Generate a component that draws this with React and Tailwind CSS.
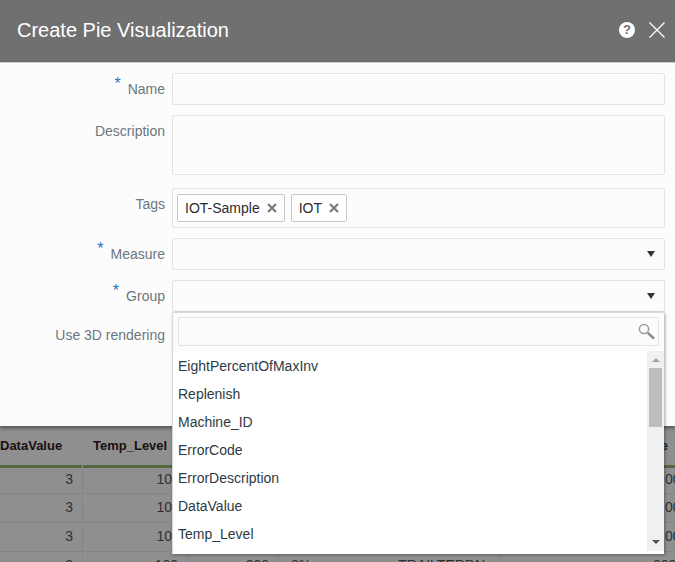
const FONT = "font-['Liberation_Sans',Arial,sans-serif]"

const FIELDS_OPTIONS = [
  'EightPercentOfMaxInv',
  'Replenish',
  'Machine_ID',
  'ErrorCode',
  'ErrorDescription',
  'DataValue',
  'Temp_Level',
]

function Label({ children, required, className = '' }) {
  return (
    <div className={`w-[165px] shrink-0 text-right text-sm text-[#6b7780] ${className}`}>
      {required && <span className="relative -top-[5px] mr-[7px] text-[16px] leading-none text-[#2f6fc4]">*</span>}
      {children}
    </div>
  )
}

function Box({ className = '', children }) {
  return (
    <div className={`flex flex-1 items-center rounded-[2px] border border-[#e3e3e3] bg-[#fcfcfc] ${className}`}>
      {children}
    </div>
  )
}

function Caret() {
  return <div className="mr-[9px] ml-auto h-0 w-0 border-x-[4.5px] border-t-[6px] border-x-transparent border-t-[#333]" />
}

function Tag({ label }) {
  return (
    <div className="flex h-[28px] items-center gap-[7px] rounded-[2px] border border-[#c4c8cc] bg-white pr-[7px] pl-[7px] text-sm text-[#2b2b2b]">
      {label}
      <svg width="10" height="10" viewBox="0 0 10 10" stroke="#7c7c7c" strokeWidth="2.2" fill="none">
        <path d="M1 1L9 9M9 1L1 9" />
      </svg>
    </div>
  )
}

function Dropdown() {
  return (
    <div className="absolute top-[312px] left-[172px] z-10 h-[242px] w-[492px] border-t border-l border-[#d9d9d9] bg-white shadow-[1px_1px_3px_rgba(0,0,0,0.35)]">
      <div className="h-[38px] bg-[#fcfcfc] px-[5px] pt-[4px]">
        <div className="flex h-[29px] items-center rounded-[2px] border border-[#e3e3e3] bg-[#fcfcfc]">
          <svg width="17" height="17" viewBox="0 0 17 17" fill="none" className="mr-[3px] ml-auto">
            <circle cx="6" cy="6" r="4.6" stroke="#9a9a9a" strokeWidth="1.5" />
            <path d="M9.8 9.8L16 15.6" stroke="#7f8a94" strokeWidth="2.4" />
          </svg>
        </div>
      </div>
      <div className="flex h-[200px]">
        <ul className="flex-1 pt-[1px] pl-[5px] text-sm text-[#2e3a44]">
          {FIELDS_OPTIONS.map((opt) => (
            <li key={opt} className="flex h-[28px] items-center">{opt}</li>
          ))}
        </ul>
        <div className="flex w-[17px] flex-col items-center bg-[#f0f0f0] pt-[7px] pb-[7px]">
          <div className="h-0 w-0 border-x-[4px] border-b-[4px] border-x-transparent border-b-[#a3a3a3]" />
          <div className="mt-[6px] h-[59px] w-[13px] bg-[#bdbdbd]" />
          <div className="mt-auto h-0 w-0 border-x-[4px] border-t-[4px] border-x-transparent border-t-[#505050]" />
        </div>
      </div>
    </div>
  )
}

export default function App() {
  return (
    <div className={`relative h-[562px] w-[675px] overflow-hidden bg-[#8f8f8f] ${FONT}`}>
      <header className="flex h-[63px] items-center border-b border-[#d6d6d6] bg-[#707070] pr-[10px] pb-[2px] pl-[17px]">
        <h1 className="text-xl text-white">Create Pie Visualization</h1>
        <div className="mr-[14px] ml-auto flex h-[16px] w-[16px] items-center justify-center rounded-full bg-white text-[13px] font-bold text-[#707070]">?</div>
        <svg width="16" height="16" viewBox="0 0 16 16" stroke="white" strokeWidth="1.3" fill="none">
          <path d="M0.5 0.5L15.5 15.5M15.5 0.5L0.5 15.5" />
        </svg>
      </header>

      <form className="h-[363px] bg-[#fcfcfc] pt-[10px] pr-[10px] shadow-[0_2px_4px_rgba(0,0,0,0.45)]">
        <div className="flex items-center gap-[7px]">
          <Label required>Name</Label>
          <Box className="h-[32px]" />
        </div>
        <div className="mt-[10px] flex gap-[7px]">
          <Label className="pt-[6px]">Description</Label>
          <Box className="h-[60px]" />
        </div>
        <div className="mt-[13px] flex gap-[7px]">
          <Label className="pt-[6px]">Tags</Label>
          <Box className="h-[40px] gap-[6px] pl-[4px]">
            <Tag label="IOT-Sample" />
            <Tag label="IOT" />
          </Box>
        </div>
        <div className="mt-[10px] flex items-center gap-[7px]">
          <Label required>Measure</Label>
          <Box className="h-[32px]"><Caret /></Box>
        </div>
        <div className="mt-[10px] flex items-center gap-[7px]">
          <Label required>Group</Label>
          <Box className="h-[32px]"><Caret /></Box>
        </div>
        <div className="mt-[13px] flex gap-[7px]">
          <Label>Use 3D rendering</Label>
        </div>
      </form>

      <Dropdown />

      {/* Grid behind the dialog */}
      <div className="text-sm text-[#2f2f2f]">
        <div className="flex h-[39px] pt-[11px] text-[13px] font-bold text-[#1a1010]">
          <div className="w-[83px]">DataValue</div>
          <div className="pl-[10px]">Temp_Level</div>
          <div className="ml-auto pr-[7px] text-[#10243a]">e</div>
        </div>
        <div className="flex h-[3px] gap-[1px]">
          <div className="w-[82px] bg-[#55683f]" />
          <div className="flex-1 bg-[#55683f]" />
        </div>
        <div className="flex h-[26px] border-b border-[#858585] pt-[1px]">
          <div className="w-[83px] border-r border-[#858585] pr-[9px] text-right">3</div>
          <div className="w-[89px] text-right">10</div>
          <div className="ml-auto w-[10px] overflow-hidden whitespace-nowrap">00</div>
        </div>
        <div className="flex h-[29px] border-b border-[#858585] pt-[3px]">
          <div className="w-[83px] border-r border-[#858585] pr-[9px] text-right">3</div>
          <div className="w-[89px] text-right">10</div>
          <div className="ml-auto w-[10px] overflow-hidden whitespace-nowrap">00</div>
        </div>
        <div className="flex h-[29px] border-b border-[#858585] pt-[3px]">
          <div className="w-[83px] border-r border-[#858585] pr-[9px] text-right">3</div>
          <div className="w-[89px] text-right">10</div>
          <div className="ml-auto w-[10px] overflow-hidden whitespace-nowrap">00</div>
        </div>
        <div className="flex h-[29px] pt-[3px]">
          <div className="w-[83px] border-r border-[#858585] pr-[9px] text-right">3</div>
          <div className="w-[105px] border-r border-[#858585] pr-[9px] text-right">100</div>
          <div className="w-[91px] border-r border-[#858585] pr-[9px] text-right">200</div>
          <div className="w-[221px] border-r border-[#858585] pl-[12px]">
            0%<span className="ml-[87px]">TRAILTERDN</span>
          </div>
          <div className="ml-auto w-[22px] overflow-hidden whitespace-nowrap">000</div>
        </div>
      </div>
    </div>
  )
}
